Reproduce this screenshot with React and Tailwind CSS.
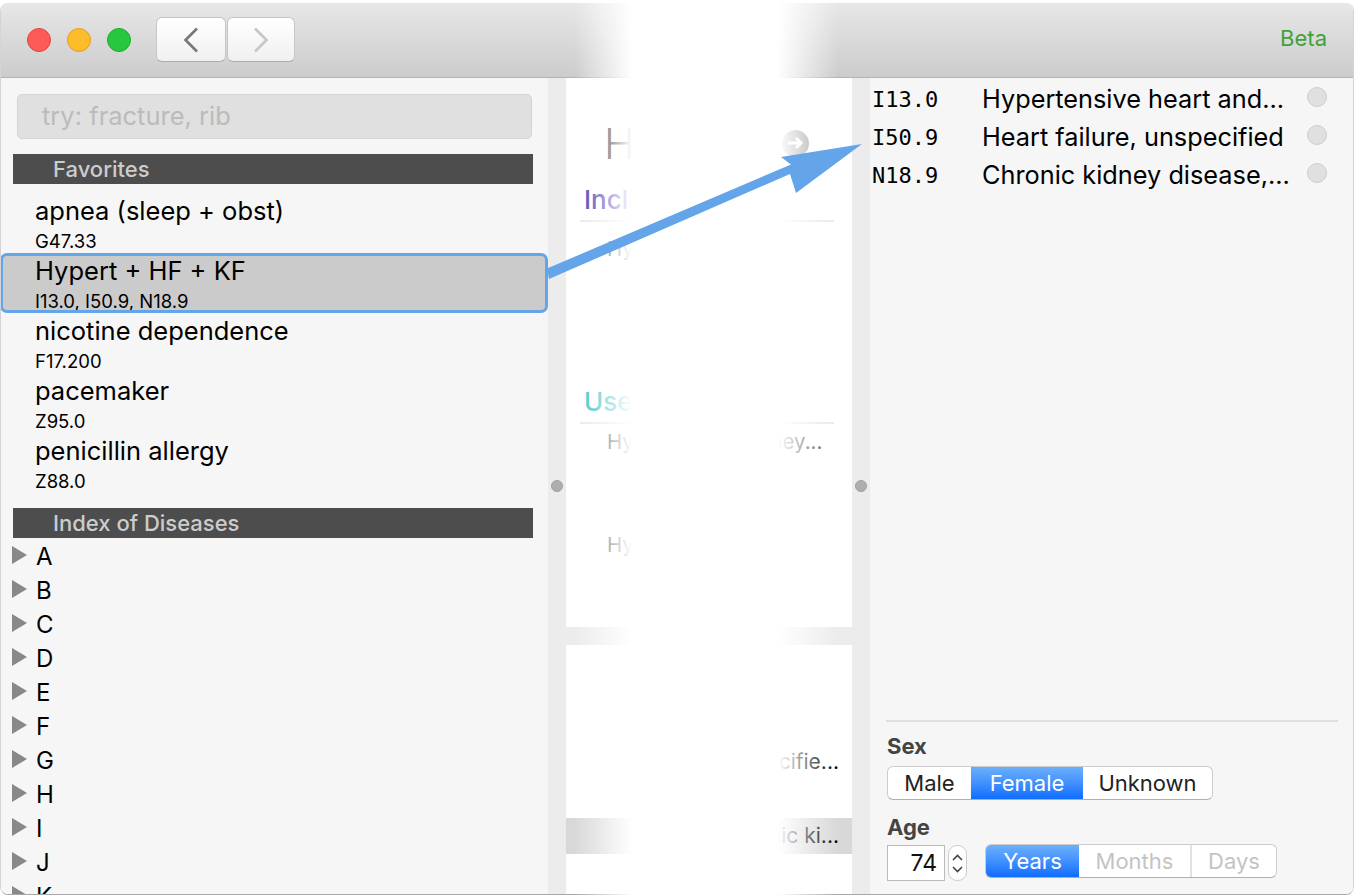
const favorites = [
  { name: "apnea (sleep + obst)", codes: "G47.33" },
  { name: "Hypert + HF + KF", codes: "I13.0, I50.9, N18.9", selected: true },
  { name: "nicotine dependence", codes: "F17.200" },
  { name: "pacemaker", codes: "Z95.0" },
  { name: "penicillin allergy", codes: "Z88.0" },
];

const letters = ["A", "B", "C", "D", "E", "F", "G", "H", "I", "J", "K"];

const codes = [
  { code: "I13.0", text: "Hypertensive heart and..." },
  { code: "I50.9", text: "Heart failure, unspecified" },
  { code: "N18.9", text: "Chronic kidney disease,..." },
];

function SectionBar({ children }) {
  return (
    <div className="h-[30px] ml-3 mr-[15px] pl-10 bg-[#4d4d4d] text-[#cccccc] text-[22px] leading-[30px] font-medium">
      {children}
    </div>
  );
}

function Dot() {
  return <div className="w-3 h-3 rounded-full bg-[#aeaeae] border border-[#a0a0a0]" />;
}

function Segment({ children, active, muted, className = "" }) {
  let tone = "text-[#222222]";
  if (active) tone = "text-white bg-gradient-to-b from-[#6cb0fb] to-[#0a6cff]";
  if (muted) tone = "text-[#c4c4c4]";
  return (
    <div className={`flex items-center justify-center h-full pt-px ${tone} ${className}`}>{children}</div>
  );
}

export default function App() {
  return (
    <div className="relative w-[1355px] h-[896px] bg-white pt-[3px] pr-px pb-px overflow-hidden font-[Inter,sans-serif]">
      <div className="flex flex-col h-full rounded-[8px] overflow-hidden border-b border-[#a8a8a8] border-x border-x-[#d4d4d4]">
        {/* title bar */}
        <div className="flex items-center h-[75px] shrink-0 pl-[26px] pr-[26px] bg-gradient-to-b from-[#e7e7e7] to-[#cccccc] border-b border-[#b2b2b2]">
          <div className="flex gap-4">
            <div className="w-6 h-6 rounded-full bg-[#fc5b57] border border-[#e2463f]" />
            <div className="w-6 h-6 rounded-full bg-[#fdbc2c] border border-[#dfa023]" />
            <div className="w-6 h-6 rounded-full bg-[#27c840] border border-[#1dad2b]" />
          </div>
          <div className="flex gap-px ml-[25px] -mt-[1px]">
            <button className="flex items-center justify-center w-[70px] h-[45px] rounded-[6px] bg-gradient-to-b from-white to-[#f0f0f0] border border-[#c6c6c6] border-b-[#ababab]">
              <svg width="16" height="26" viewBox="0 0 16 26" fill="none">
                <path d="M14 1.5 2.5 13 14 24.5" stroke="#777777" strokeWidth="2.6" />
              </svg>
            </button>
            <button className="flex items-center justify-center w-[68px] h-[45px] rounded-[6px] bg-gradient-to-b from-white to-[#f0f0f0] border border-[#c6c6c6] border-b-[#ababab]">
              <svg width="16" height="26" viewBox="0 0 16 26" fill="none">
                <path d="M2 1.5 13.5 13 2 24.5" stroke="#c6c6c6" strokeWidth="2.6" />
              </svg>
            </button>
          </div>
          <div className="ml-auto -mt-[4px] text-[#3fa23b] text-[22px]">Beta</div>
        </div>

        <div className="flex flex-1 min-h-0">
          {/* left pane */}
          <div className="w-[547px] shrink-0 bg-[#f6f6f6] overflow-hidden">
            <div className="flex items-center h-[45px] mt-[16px] ml-4 mr-4 pl-6 bg-[#e0e0e0] border border-[#d4d4d4] rounded-[5px] text-[#bbbbbb] text-[25.5px]">
              try: fracture, rib
            </div>
            <div className="mt-[15px]">
              <SectionBar>Favorites</SectionBar>
            </div>
            <div className="mt-[9px]">
              {favorites.map((f) => (
                <div
                  key={f.name}
                  className={
                    f.selected
                      ? "-ml-px h-[60px] pl-[32px] bg-[#cbcbcb] border-[3px] border-[#63a5e8] rounded-[7px] overflow-hidden text-black"
                      : "h-[60px] pl-[34px] pt-[3px] text-black"
                  }
                >
                  <div className="text-[25.5px] leading-[30px] whitespace-nowrap">{f.name}</div>
                  <div className="text-[18.5px] leading-[30px] whitespace-nowrap">{f.codes}</div>
                </div>
              ))}
            </div>
            <div className="mt-[15px]">
              <SectionBar>Index of Diseases</SectionBar>
            </div>
            <div className="mt-[2px]">
              {letters.map((l) => (
                <div key={l} className="flex items-center h-[34px]">
                  <svg className="ml-[11px] -mt-[5px]" width="15" height="18" viewBox="0 0 15 18">
                    <path d="M0 0 15 9 0 18z" fill="#888888" />
                  </svg>
                  <div className="ml-[9px] text-[24px] text-black">{l}</div>
                </div>
              ))}
            </div>
          </div>

          <div className="flex items-center justify-center w-[18px] shrink-0 bg-[#ececec]">
            <Dot />
          </div>

          {/* middle pane, mostly hidden by the fade */}
          <div className="flex flex-col w-[286px] shrink-0 bg-white overflow-hidden">
            <div className="flex items-center justify-between h-[96px] pl-[38px] pr-[43px] pt-[34px] shrink-0">
              <div className="text-[42px] font-light text-black whitespace-nowrap">Hypert</div>
              <div className="flex items-center justify-center w-[27px] h-[27px] rounded-full bg-[#9a9a9a]">
                <svg width="17" height="14" viewBox="0 0 17 14" fill="none">
                  <path d="M1 7h13M9 2l5 5-5 5" stroke="#ffffff" strokeWidth="3" />
                </svg>
              </div>
            </div>
            <div className="ml-[14px] mr-[18px] h-[48px] pl-[4px] border-b-2 border-[#e8e8e8] text-[26px] leading-[52px] font-medium text-[#3a2db0]">
              Includes
            </div>
            <div className="pl-[41px] pt-[12px] h-[158px] text-[20.5px] text-[#444444]">Hypertensive</div>
            <div className="ml-[14px] mr-[18px] h-[44px] pl-[4px] border-b-2 border-[#e8e8e8] text-[26px] leading-[44px] font-medium text-[#30c0c0]">
              Use additional
            </div>
            <div className="pl-[41px] pt-[3px] h-[106px] text-[20.5px] text-[#444444]">Hypertensive kidney...</div>
            <div className="pl-[41px] h-[97px] text-[20.5px] text-[#444444]">Hypertensive</div>
            <div className="h-[18px] bg-[#ececec] shrink-0" />
            <div className="flex justify-end pr-[13px] pt-[103px] h-[173px] shrink-0 text-[21px] leading-[28px] text-black whitespace-nowrap">
              failure, unspecifie...
            </div>
            <div className="flex items-center justify-end h-[36px] pr-[13px] shrink-0 bg-[#d8d8d8] text-[21px] text-black whitespace-nowrap">
              and chronic ki...
            </div>
          </div>

          <div className="flex items-center justify-center w-[18px] shrink-0 bg-[#ececec]">
            <Dot />
          </div>

          {/* right pane */}
          <div className="flex flex-col flex-1 min-w-0 bg-[#f6f6f6]">
            <div className="pt-[2px]">
              {codes.map((c) => (
                <div key={c.code} className="flex items-center h-[38px] text-black">
                  <div className="w-[112px] pl-[2px] shrink-0 font-['DejaVu_Sans_Mono',monospace] text-[22px]">{c.code}</div>
                  <div className="w-[325px] shrink-0 whitespace-nowrap text-[25.3px]">{c.text}</div>
                  <div className="w-5 h-5 -mt-[5px] rounded-full bg-[#e0e0e0] border border-[#cdcdcd]" />
                </div>
              ))}
            </div>

            <div className="mt-auto ml-4 mr-[15px] pb-[13px]">
              <div className="h-[2px] bg-[#e0e0e0]" />
              <div className="mt-[11px] ml-px text-[22px] leading-[26px] font-bold text-[#444444]">Sex</div>
              <div className="flex w-[326px] h-[34px] mt-[7px] ml-px rounded-[6px] overflow-hidden bg-white border border-[#cccccc] border-b-[#b0b0b0] text-[22px]">
                <Segment className="w-[83px]">Male</Segment>
                <Segment active className="w-[112px]">Female</Segment>
                <Segment className="flex-1">Unknown</Segment>
              </div>
              <div className="mt-[14px] ml-px text-[22px] leading-[26px] font-bold text-[#444444]">Age</div>
              <div className="flex items-center mt-[5px] ml-px">
                <div className="flex items-center justify-end w-[58px] h-9 pr-[7px] bg-white border border-[#bbbbbb] text-[23px] text-[#111111]">
                  74
                </div>
                <div className="flex flex-col items-center justify-center gap-[5px] w-[19px] h-9 ml-[3px] rounded-[9px] bg-white border border-[#cccccc]">
                  <svg width="11" height="7" viewBox="0 0 11 7" fill="none">
                    <path d="M1 6 5.5 1.5 10 6" stroke="#444444" strokeWidth="1.6" />
                  </svg>
                  <svg width="11" height="7" viewBox="0 0 11 7" fill="none">
                    <path d="M1 1 5.5 5.5 10 1" stroke="#444444" strokeWidth="1.6" />
                  </svg>
                </div>
                <div className="flex w-[292px] h-[34px] ml-[18px] -mt-[4px] rounded-[6px] overflow-hidden bg-white border border-[#cccccc] border-b-[#b0b0b0] text-[22px]">
                  <Segment active className="w-[93px]">Years</Segment>
                  <Segment muted className="w-[113px] border-r-2 border-[#e2e2e2]">Months</Segment>
                  <Segment muted className="flex-1">Days</Segment>
                </div>
              </div>
            </div>
          </div>
        </div>
      </div>

      {/* white fade over the middle of the window */}
      <div className="absolute top-0 bottom-0 left-[566px] w-[286px] pointer-events-none bg-[linear-gradient(to_right,rgba(255,255,255,0)_8px,#ffffff_66px,#ffffff_212px,rgba(255,255,255,0)_272px)]" />

      {/* callout arrow */}
      <svg className="absolute top-0 left-0 pointer-events-none" width="1355" height="896" viewBox="0 0 1355 896">
        <path d="M547 268.5 791 164.5 781 157 862 144 796 193 790 174 549 279z" fill="#64a5e9" />
      </svg>
    </div>
  );
}
